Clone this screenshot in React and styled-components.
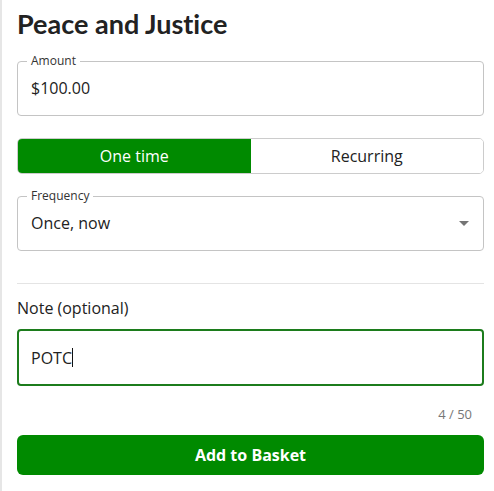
import React from 'react';
import styled, { createGlobalStyle } from 'styled-components';

const GREEN = '#008a00';

const GlobalStyle = createGlobalStyle`
  body {
    margin: 0;
    background: #fff;
    font-family: "Open Sans", Lato, sans-serif;
    color: #222;
  }
`;

const Panel = styled.div`
  box-sizing: border-box;
  width: 494px;
  height: 491px;
  border-left: 2px solid #e6e6e6;
  padding: 6px 10px 0 15px;
  display: flex;
  flex-direction: column;
`;

const Title = styled.h1`
  margin: 0;
  font-family: Lato, "Open Sans", sans-serif;
  font-size: 27px;
  line-height: 36px;
  font-weight: 700;
  font-variant-ligatures: none;
  color: #222;
`;

const Field = styled.fieldset`
  margin: ${(p) => p.top || 0}px 0 0;
  padding: 0 13px;
  height: 61px;
  box-sizing: border-box;
  border: 1px solid #c4c4c4;
  border-radius: 4px;
  min-width: 0;
`;

const Legend = styled.legend`
  padding: 0 4px;
  margin-left: -4px;
  font-size: 12px;
  line-height: 12px;
  color: #333;
`;

const Row = styled.div`
  height: 48px;
  box-sizing: border-box;
  padding-bottom: 6px;
  display: flex;
  align-items: center;
  justify-content: space-between;
`;

const Value = styled.span`
  font-size: 16px;
  color: #222;
`;

const Caret = styled.span`
  width: 0;
  height: 0;
  border-left: 5px solid transparent;
  border-right: 5px solid transparent;
  border-top: 5px solid #757575;
  margin-right: 1px;
`;

const Toggle = styled.div`
  margin-top: 22px;
  height: 36px;
  display: grid;
  grid-template-columns: 1fr 1fr;
  border: 1px solid #cccccc;
  border-radius: 5px;
  overflow: hidden;
  box-sizing: border-box;
`;

const ToggleButton = styled.button`
  border: none;
  font-family: inherit;
  font-size: 16px;
  background: ${(p) => (p.active ? GREEN : '#fff')};
  color: ${(p) => (p.active ? '#fff' : '#222')};
  padding: 0;
`;

const Divider = styled.hr`
  margin: 32px 0 0;
  border: none;
  border-top: 1px solid #e4e4e4;
`;

const Label = styled.div`
  margin-top: 14px;
  font-size: 16px;
  line-height: 20px;
  color: #222;
`;

const NoteBox = styled.div`
  margin-top: 11px;
  height: 57px;
  box-sizing: border-box;
  border: 2px solid #1c7c1c;
  border-radius: 4px;
  padding: 0 12px;
  display: flex;
  align-items: center;
  font-size: 16px;
  color: #222;
`;

const Cursor = styled.span`
  display: inline-block;
  width: 1px;
  height: 19px;
  background: #111;
`;

const Counter = styled.div`
  margin-top: 19px;
  padding-right: 12px;
  text-align: right;
  font-size: 13px;
  line-height: 18px;
  color: #777;
`;

const AddButton = styled.button`
  margin-top: 12px;
  height: 40px;
  border: none;
  border-radius: 6px;
  background: ${GREEN};
  color: #fff;
  font-family: inherit;
  font-size: 16px;
  font-weight: 700;
`;

export default function App() {
  return (
    <>
      <GlobalStyle />
      <Panel>
        <Title>Peace and Justice</Title>
        <Field top={13}>
          <Legend>Amount</Legend>
          <Row>
            <Value>$100.00</Value>
          </Row>
        </Field>
        <Toggle>
          <ToggleButton active>One time</ToggleButton>
          <ToggleButton>Recurring</ToggleButton>
        </Toggle>
        <Field top={16}>
          <Legend>Frequency</Legend>
          <Row>
            <Value>Once, now</Value>
            <Caret />
          </Row>
        </Field>
        <Divider />
        <Label>Note (optional)</Label>
        <NoteBox>
          POTC<Cursor />
        </NoteBox>
        <Counter>4 / 50</Counter>
        <AddButton>Add to Basket</AddButton>
      </Panel>
    </>
  );
}
